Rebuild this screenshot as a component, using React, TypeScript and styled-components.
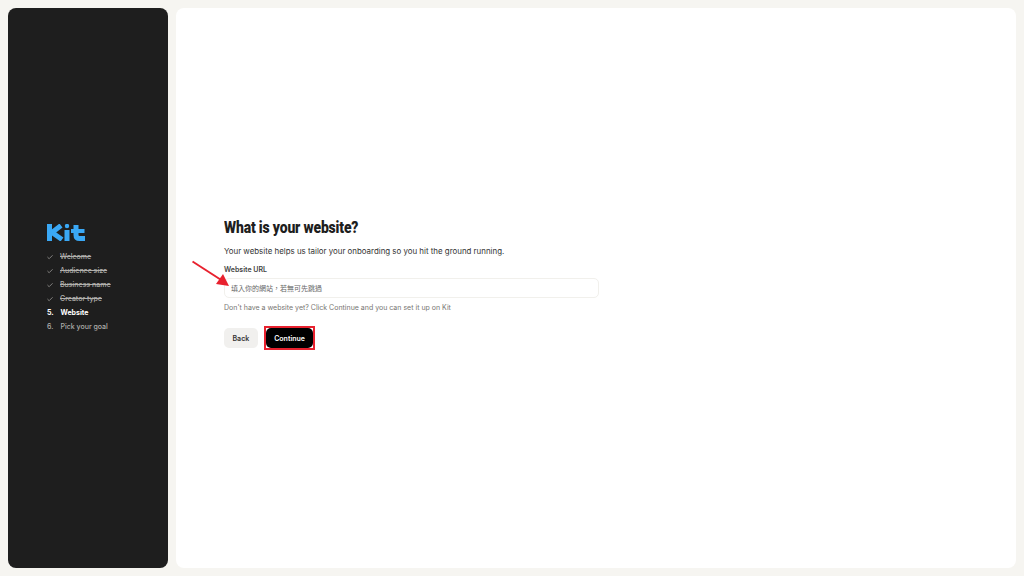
import { createGlobalStyle, styled } from "styled-components";

const GlobalStyle = createGlobalStyle`
  html, body {
    margin: 0;
    height: 100%;
    background: #f6f5f1;
    font-family: "Inter", "Noto Sans CJK TC", sans-serif;
  }
  #root {
    height: 100%;
  }
  * {
    box-sizing: border-box;
  }
`;

const Page = styled.div`
  display: flex;
  gap: 8px;
  height: 576px;
  padding: 8px;
`;
const Sidebar = styled.aside`
  width: 160px;
  flex-shrink: 0;
  display: flex;
  flex-direction: column;
  justify-content: center;
  padding-left: 39px;
  padding-bottom: 19px;
  background: #1e1e1e;
  border-radius: 8px;
`;
const Logo = styled.svg`
  display: block;
  width: 39px;
  height: 17px;
  margin-bottom: 9px;
`;
const Steps = styled.ol`
  margin: 0;
  padding: 0;
  list-style: none;
  display: flex;
  flex-direction: column;
`;
const Step = styled.li<{ $state: "done" | "active" | "todo" }>`
  display: flex;
  align-items: center;
  gap: ${(p) => (p.$state === "done" ? "7px" : "7.5px")};
  height: 14px;
  font-size: 7px;
  font-weight: ${(p) => (p.$state === "active" ? 700 : 500)};
  color: ${(p) => (p.$state === "active" ? "#ffffff" : "#b0afac")};
`;
const StepMark = styled.span`
  width: 6px;
  flex-shrink: 0;
  display: flex;
  align-items: center;
`;
const StepLabel = styled.span<{ $struck?: boolean }>`
  text-decoration: ${(p) => (p.$struck ? "line-through" : "none")};
  text-decoration-thickness: 0.5px;
`;
const Main = styled.main`
  flex: 1;
  display: flex;
  flex-direction: column;
  justify-content: center;
  padding-left: 48px;
  padding-bottom: 11px;
  background: #ffffff;
  border-radius: 8px;
`;
const Form = styled.div`
  position: relative;
  width: 375px;
  display: flex;
  flex-direction: column;
  align-items: flex-start;
`;
const Title = styled.h1`
  margin: 0 0 7px;
  font-family: "Roboto", sans-serif;
  font-size: 17px;
  line-height: 20px;
  font-weight: 900;
  letter-spacing: -0.2px;
  white-space: nowrap;
  transform: scaleX(0.82);
  transform-origin: left center;
  color: #1e1e1e;
`;
const Intro = styled.p`
  margin: 0 0 6px;
  font-size: 7.9px;
  line-height: 14px;
  color: #333333;
`;
const FieldLabel = styled.label`
  margin-bottom: 2px;
  font-size: 7px;
  line-height: 12px;
  font-weight: 600;
  color: #444444;
`;
const UrlInput = styled.input`
  width: 100%;
  height: 20px;
  padding: 0 6px;
  border: 1px solid #f1f0ec;
  border-radius: 5px;
  outline: none;
  background: #ffffff;
  font-family: inherit;
  font-size: 7px;
  &::placeholder {
    color: #666666;
    opacity: 1;
  }
`;
const Hint = styled.p`
  margin: 4px 0 12px;
  font-size: 7px;
  line-height: 12px;
  color: #777672;
`;
const Actions = styled.div`
  display: flex;
  align-items: center;
  gap: 6.5px;
  margin-bottom: -2px;
`;
const Button = styled.button<{ $primary?: boolean }>`
  display: block;
  height: 20px;
  padding: 0 ${(p) => (p.$primary ? "8px" : "8.5px")};
  border: none;
  border-radius: 5px;
  font-family: inherit;
  font-size: 7px;
  font-weight: 600;
  color: ${(p) => (p.$primary ? "#ffffff" : "#333333")};
  background: ${(p) => (p.$primary ? "#000000" : "#f1f0ee")};
`;
const Highlight = styled.span`
  display: block;
  border: 2px solid #e8212e;
`;
const Arrow = styled.svg`
  position: absolute;
  left: -32px;
  top: 43px;
  width: 40px;
  height: 30px;
`;

const steps = [
  { label: "Welcome", state: "done" },
  { label: "Audience size", state: "done" },
  { label: "Business name", state: "done" },
  { label: "Creator type", state: "done" },
  { label: "Website", state: "active" },
  { label: "Pick your goal", state: "todo" },
] as const;

export default function App() {
  return (
    <Page>
      <GlobalStyle />
      <Sidebar>
        <Logo viewBox="0 0 39 17" aria-label="Kit">
          <g stroke="#3aa8f5" fill="none" strokeLinejoin="round" strokeWidth="5">
            <line x1="2.5" y1="0" x2="2.5" y2="17" />
            <polyline points="14,1.5 5,8.5 15,15.5" />
            <line x1="20" y1="6" x2="20" y2="17" />
            <path d="M29 1V11Q29 14.5 32.5 14.5H38" />
            <line x1="24" y1="7" x2="37.5" y2="7" strokeWidth="4" />
          </g>
          <circle cx="20" cy="2" r="2.2" fill="#3aa8f5" />
        </Logo>
        <Steps>
          {steps.map((step, i) => (
            <Step key={step.label} $state={step.state}>
              <StepMark>
                {step.state === "done" ? (
                  <svg width="7" height="6" viewBox="0 0 7 6">
                    <polyline points="0.5,3 2.5,5 6.5,1" fill="none" stroke="#b0afac" strokeWidth="0.8" />
                  </svg>
                ) : (
                  `${i + 1}.`
                )}
              </StepMark>
              <StepLabel $struck={step.state === "done"}>{step.label}</StepLabel>
            </Step>
          ))}
        </Steps>
      </Sidebar>
      <Main>
        <Form>
          <Title>What is your website?</Title>
          <Intro>Your website helps us tailor your onboarding so you hit the ground running.</Intro>
          <FieldLabel>Website URL</FieldLabel>
          <UrlInput placeholder="填入你的網站，若無可先跳過" />
          <Hint>Don't have a website yet? Click Continue and you can set it up on Kit</Hint>
          <Actions>
            <Button>Back</Button>
            <Highlight>
              <Button $primary>Continue</Button>
            </Highlight>
          </Actions>
          <Arrow viewBox="0 0 40 30">
            <line x1="0.5" y1="1.5" x2="30" y2="20.5" stroke="#e8212e" strokeWidth="2" />
            <polygon points="37,26 24,24 31,14" fill="#e8212e" />
          </Arrow>
        </Form>
      </Main>
    </Page>
  );
}
